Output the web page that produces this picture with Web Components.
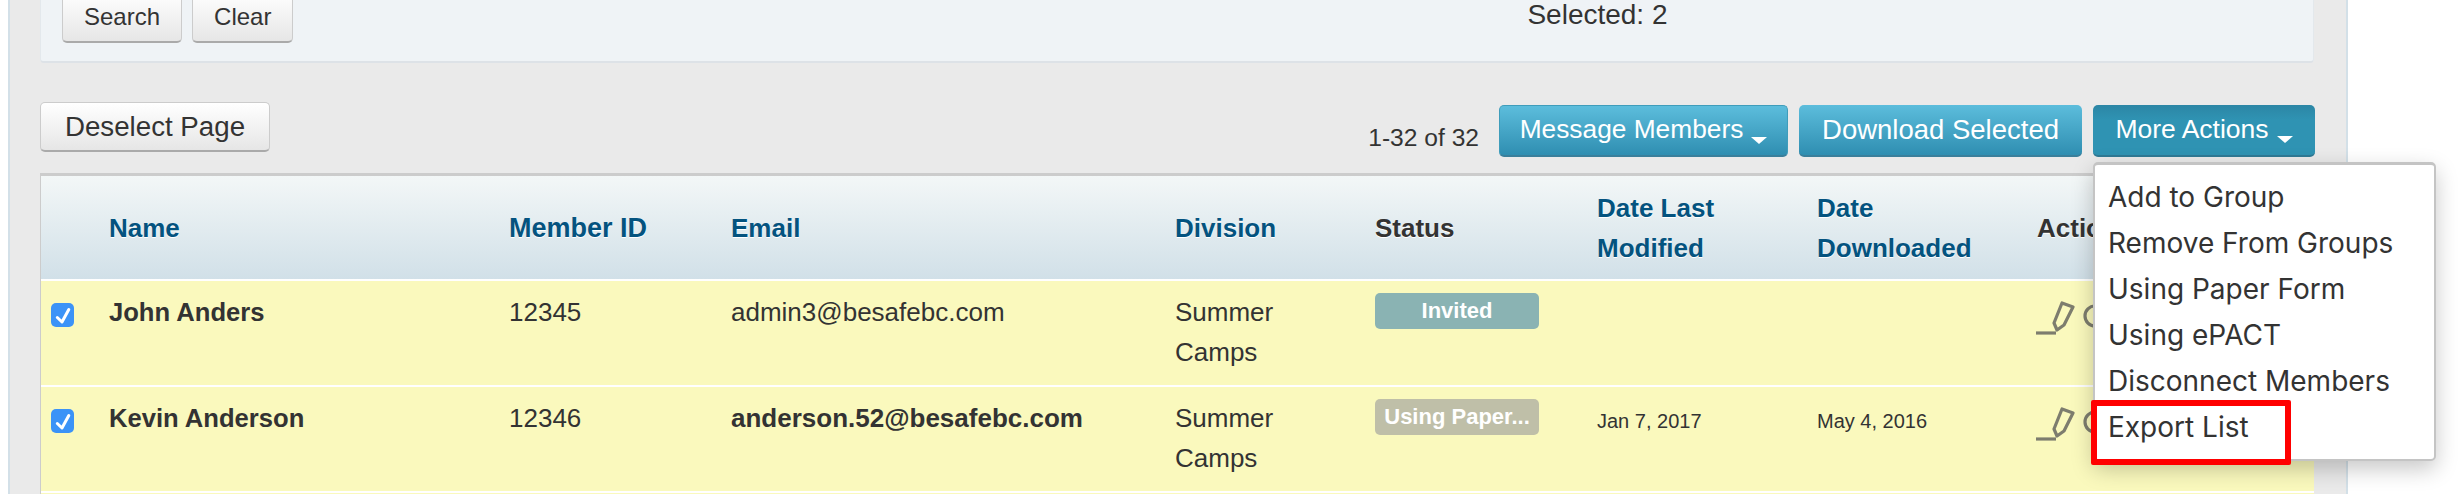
<!DOCTYPE html>
<html><head><meta charset="utf-8"><style>
html,body{margin:0;padding:0;background:#fff;height:494px;overflow:hidden}
body{font-family:"Liberation Sans",Arial,sans-serif;color:#333}
</style></head><body>
<x-page>
  <x-search-panel selected="Selected: 2">
    <x-btn size="s">Search</x-btn><x-btn size="s">Clear</x-btn>
  </x-search-panel>
  <x-toolbar count="1-32 of 32">
    <x-btn slot="left" size="m">Deselect Page</x-btn>
    <x-btn slot="right" kind="blue" outlined caret style="width:289px;font-size:26.3px">Message Members</x-btn>
    <x-btn slot="right" kind="blue" style="width:283px;font-size:27.5px">Download Selected</x-btn>
    <x-btn slot="right" kind="dark" caret style="width:222px;font-size:26.5px">More Actions</x-btn>
  </x-toolbar>
  <x-member-table></x-member-table>
  <x-menu>
    <span>Add to Group</span><span>Remove From Groups</span><span>Using Paper Form</span><span>Using ePACT</span><span>Disconnect Members</span><span>Export List</span>
  </x-menu>
</x-page>
<script>
function def(name, html, cls){
  const t=document.createElement('template');t.innerHTML=html;
  customElements.define(name, class extends HTMLElement{
    constructor(){super();this.attachShadow({mode:'open'}).appendChild(t.content.cloneNode(true));}
    connectedCallback(){cls&&cls.call(this,this.shadowRoot)}
  });
}
def('x-page',`<style>
:host{display:flow-root;position:relative;box-sizing:border-box;width:2340px;height:494px;margin-left:8px;background:#eaeaea;border-left:2px solid #d3e0e8;border-right:2px solid #d3e0e8;padding:0 30px}
</style><slot></slot>`);
def('x-search-panel',`<style>
:host{display:flex;box-sizing:border-box;height:73px;margin-top:-10px;width:2274px;background:#eff3f6;border:1px solid #e3e8ec;border-bottom:2px solid #dde2e7;border-top:0;border-radius:0 0 4px 4px;padding:1px 21px 0;position:relative}
.btns{display:flex;gap:10px;align-items:flex-start}
.sel{margin-left:1234px;font-size:28px;line-height:28px;padding-top:10px}
</style><div class="btns"><slot></slot></div><div class="sel"></div>`,function(r){r.querySelector('.sel').textContent=this.getAttribute('selected')});
def('x-btn',`<style>
:host{display:inline-flex;box-sizing:border-box;align-items:center;justify-content:center;gap:8px;border-radius:5px;font-size:26px;white-space:nowrap;height:52px;color:#fff;background:linear-gradient(#5cbddc,#2f8eb1);border-bottom:2px solid #3a7f9b}
:host([outlined]){border:1px solid #3f9dbb;border-bottom:2px solid #3a7f9b}
:host([size=s]){font-size:24px;color:#333;padding:0 21px;background:linear-gradient(#fff,#e6e6e6);border:1px solid #ccc;border-bottom:2px solid #aaa}
:host([size=m]){height:50px;width:230px;font-size:27.7px;color:#333;background:linear-gradient(#fff,#e6e6e6);border:1px solid #ccc;border-bottom:2px solid #aaa}
:host([kind=dark]){background:linear-gradient(#2c86a5,#2f93b3 30%);border-bottom-color:#2f7a95}
.c{display:none;width:0;height:0;border:8px solid transparent;border-top:7px solid #fff;border-bottom:0;margin-top:19px}
:host([caret]) .c{display:block}
:host([caret]) .t{margin-top:-2px}
</style><span class="t"><slot></slot></span><i class="c"></i>`);
def('x-toolbar',`<style>
:host{display:flex;align-items:flex-start;height:110px;box-sizing:border-box;padding-top:39px;width:2275px}
.r{margin-left:auto;margin-top:3px;display:flex;align-items:flex-start;gap:11px}
.n{font-size:24.6px;line-height:28px;margin:19px 9px 0 0}
</style><slot name="left"></slot><div class="r"><span class="n"></span><slot name="right"></slot></div>`,function(r){r.querySelector('.n').textContent=this.getAttribute('count')});
const ICON=`<svg width="70" height="36" viewBox="0 0 70 36" fill="none" stroke="#7d7d6e" stroke-width="3.2"><path d="M0 32H20"/><path d="M18 22L26 2L37 6L28 24L21 29Z" stroke-linejoin="round"/><circle cx="59" cy="15" r="10"/></svg>`;
def('x-member-table',`<style>
:host{display:block;width:2274px;height:321px;border-top:3px solid #ccc;box-sizing:border-box;border-left:1px solid #ccc;background:#faf9bd}
.g{display:grid;grid-template-columns:68px 400px 222px 444px 200px 222px 220px 220px 1fr}
.hd{height:103px;align-items:center;background:linear-gradient(#f3f7f7,#d1e0e8);font-size:26px;font-weight:700;line-height:40px;color:#04537f;text-shadow:0 1px 0 #fff;border-bottom:2px solid #fff}
.hd .k{color:#333}
.hd .m{font-size:27px}
.row{height:104px;background:#faf9bd;border-bottom:2px solid #fff;font-size:26px;line-height:40px;align-items:start}
.row>*{padding-top:11px}
.row>.cb{padding-top:22px;padding-left:10px}
.b{font-weight:700}
.row>.n{font-size:25.6px}
.row>.d{font-size:20px;padding-top:14px}
.row>.ic{padding-top:20px;line-height:0;margin-left:-1px}
.row>.bd{padding-top:12px}
</style>
<div class="g hd"><span></span><span>Name</span><span class="m">Member ID</span><span>Email</span><span>Division</span><span class="k">Status</span><span>Date Last<br>Modified</span><span>Date<br>Downloaded</span><span class="k">Actions</span></div>
<div class="g row"><span class="cb"><x-check></x-check></span><span class="b n">John Anders</span><span>12345</span><span>admin3@besafebc.com</span><span>Summer<br>Camps</span><span class="bd"><x-badge color="#8ab3b3">Invited</x-badge></span><span class="d"></span><span class="d"></span><span class="ic">${ICON}</span></div>
<div class="g row"><span class="cb"><x-check></x-check></span><span class="b n">Kevin Anderson</span><span>12346</span><span class="b">anderson.52@besafebc.com</span><span>Summer<br>Camps</span><span class="bd"><x-badge color="#bfbfa8">Using Paper...</x-badge></span><span class="d">Jan 7, 2017</span><span class="d">May 4, 2016</span><span class="ic">${ICON}</span></div>`);
def('x-check',`<style>:host{display:block;width:23px;height:24px}svg{display:block}</style><svg width="23" height="24" viewBox="0 0 23 24"><rect width="23" height="24" rx="5" fill="#3b93f7"/><path d="M6.3 14.5L11 19L17.8 6.5" fill="none" stroke="#fff" stroke-width="3" stroke-linecap="round" stroke-linejoin="round"/></svg>`);
def('x-badge',`<style>:host{display:flex;align-items:center;justify-content:center;box-sizing:border-box;width:164px;height:36px;border-radius:5px;color:#fff;font-size:22px;font-weight:700;white-space:nowrap;line-height:36px}</style><slot></slot>`,function(){this.style.background=this.getAttribute('color')});
def('x-menu',`<style>
:host{position:absolute;left:2083px;top:162px;box-sizing:border-box;width:343px;height:299px;background:#fff;border:2px solid #c4c4c4;border-top-width:3px;border-radius:5px;box-shadow:0 8px 22px rgba(0,0,0,.22);padding:9px 0 0 13px;display:flex;flex-direction:column;font-family:Inter,"Liberation Sans",sans-serif;font-size:28px;line-height:46px;color:#333}
::slotted(span){display:block;white-space:nowrap}
.hl{position:absolute;left:-4px;top:235px;width:200px;height:65px;box-sizing:border-box;border:6px solid #f00;border-radius:2px}
</style><slot></slot><div class="hl"></div>`);
</script></body></html>
